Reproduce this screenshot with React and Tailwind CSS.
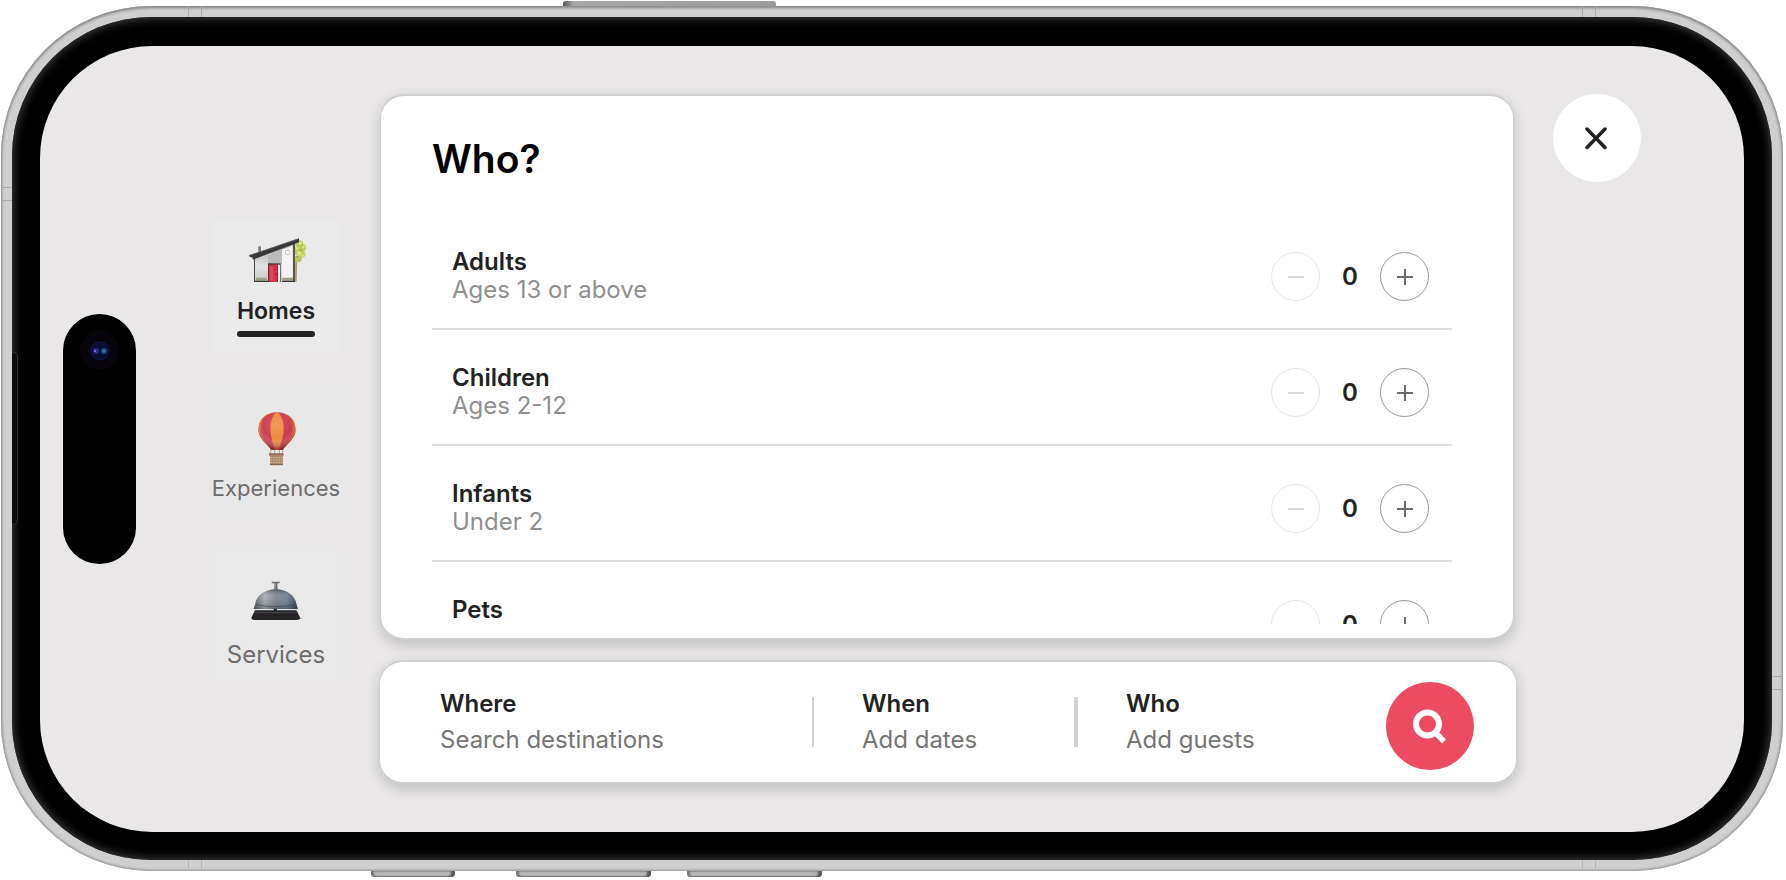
import React, { useState } from 'react';

const GUESTS = [
    { id: "adults", name: "Adults", detail: "Ages 13 or above" },
    { id: "children", name: "Children", detail: "Ages 2-12" },
    { id: "infants", name: "Infants", detail: "Under 2" },
    { id: "pets", name: "Pets" },
];

function HouseIcon() {
    return (
        <svg viewBox="138 82 180 138" className="w-[60px] h-[46px]" aria-hidden="true">
            <defs>
                <linearGradient id="wall" x1="0" y1="0" x2="0" y2="1">
                    <stop offset="0" stopColor="#a9a9ab" />
                    <stop offset="0.6" stopColor="#e2e2e3" />
                    <stop offset="1" stopColor="#c4c6bd" />
                </linearGradient>
            </defs>
            {/* Tree */}
            <path d="M286 140 L292 140 L290 216 L285 216 Z" fill="#b49a6c" />
            <g fill="#bccb5c">
                <circle cx="298" cy="104" r="12" />
                <circle cx="307" cy="114" r="11" />
                <circle cx="295" cy="124" r="14" />
                <circle cx="305" cy="134" r="11" />
                <circle cx="295" cy="148" r="10" />
            </g>
            <g fill="#dce68a">
                <circle cx="301" cy="101" r="5" />
                <circle cx="311" cy="112" r="4" />
                <circle cx="298" cy="131" r="6" />
                <circle cx="308" cy="138" r="4" />
                <circle cx="291" cy="115" r="4" />
            </g>
            <g fill="#8fa339">
                <circle cx="303" cy="122" r="3" />
                <circle cx="292" cy="141" r="3" />
                <circle cx="306" cy="106" r="2" />
                <circle cx="300" cy="150" r="2" />
            </g>
            <rect x="175" y="110" width="8" height="24" fill="#7a7a7d" />
            {/* Walls */}
            <path d="M163 145 L285 102 L285 216 L163 216 Z" fill="url(#wall)" />
            <path d="M204 138 L246 122 L246 164 L204 164 Z" fill="#bcbcbf" />
            <path d="M246 120 L278 108 L278 205 L246 205 Z" fill="#f3f3f3" />
            <path d="M279 104 L285 102 L285 216 L279 216 Z" fill="#555558" />
            <rect x="162" y="143" width="3" height="73" fill="#4a4a4c" />
            <rect x="168" y="204" width="32" height="9" fill="#9aa286" />
            <rect x="247" y="204" width="32" height="9" fill="#9aa286" />
            <path d="M162 213 H204 V217 H162 Z M246 213 H285 V217 H246 Z" fill="#3a3a3c" />
            {/* Door */}
            <rect x="204" y="161" width="38" height="56" fill="#4b3438" />
            <rect x="207" y="165" width="25" height="52" fill="#d93248" />
            <rect x="211" y="171" width="8" height="40" fill="#e34a5c" />
            <rect x="234" y="165" width="6" height="52" fill="#f4eeee" />
            <circle cx="228" cy="193" r="2" fill="#5b1821" />
            <rect x="257" y="122" width="12" height="13" rx="3" fill="#ffffff" stroke="#a5a5a8" strokeWidth="2" />
            {/* Roof */}
            <path d="M147 137 L297 86 L297 98 L158 150 L158 144 L149 141 Z" fill="#39393c" />
            <path d="M149 137 L295 88" stroke="#6b6b6e" strokeWidth="2" />
        </svg>
    );
}

function BalloonIcon() {
    return (
        <svg viewBox="-6 0 120 162" className="w-10 h-[54px]" aria-hidden="true">
            <defs>
                <radialGradient id="envelope" cx="0.5" cy="0.3" r="0.65">
                    <stop offset="0" stopColor="#ffffff" stopOpacity="0.15" />
                    <stop offset="0.6" stopColor="#ffffff" stopOpacity="0" />
                    <stop offset="1" stopColor="#5a1010" stopOpacity="0.5" />
                </radialGradient>
                <clipPath id="envelopeClip">
                    <path d="M57 1 C92 1 113 25 113 54 C113 80 84 98 74 114 H40 C30 98 1 80 1 54 C1 25 22 1 57 1 Z" />
                </clipPath>
            </defs>
            <g clipPath="url(#envelopeClip)">
                <rect width="114" height="116" fill="#d4413f" />
                <path d="M57 0 C20 2 6 30 8 60 C10 82 32 98 42 116 H0 V0 Z" fill="#db7440" />
                <path d="M57 0 C94 2 108 30 106 60 C104 82 82 98 72 116 H114 V0 Z" fill="#d6623b" />
                <path d="M57 0 C34 4 12 28 12 56 C12 80 36 98 44 116 H54 C44 90 36 72 36 52 C36 28 44 8 57 0 Z" fill="#cf3f58" />
                <path d="M57 0 C80 4 102 28 102 56 C102 80 78 98 70 116 H60 C70 90 78 72 78 52 C78 28 70 8 57 0 Z" fill="#c93a50" />
                <path d="M57 0 C44 8 37 28 37 52 C37 74 45 94 52 116 H62 C69 94 77 74 77 52 C77 28 70 8 57 0 Z" fill="#ec8a3e" />
                <rect width="114" height="116" fill="url(#envelope)" />
            </g>
            <path d="M39 112 L37 126 M75 112 L73 126 M50 114 V126 M64 114 V126" stroke="#8b7a6c" strokeWidth="2" />
            <rect x="33" y="124" width="44" height="7" rx="2" fill="#8f6c4f" />
            <rect x="36" y="130" width="39" height="29" rx="3" fill="#a98a6d" />
            <path d="M37 137 H74 M37 144 H74 M37 151 H74" stroke="#d2b797" strokeWidth="3" strokeDasharray="5 3" />
            <path d="M36 158 H75" stroke="#7d5c44" strokeWidth="3" />
        </svg>
    );
}

function BellIcon() {
    return (
        <svg viewBox="151 418 168 126" className="w-[56px] h-[42px]" aria-hidden="true">
            <defs>
                <linearGradient id="dome" x1="0" y1="0" x2="1" y2="0">
                    <stop offset="0" stopColor="#4d535b" />
                    <stop offset="0.25" stopColor="#a3a8ad" />
                    <stop offset="0.5" stopColor="#747b84" />
                    <stop offset="0.75" stopColor="#66788d" />
                    <stop offset="1" stopColor="#2c3644" />
                </linearGradient>
                <linearGradient id="domeShade" x1="0" y1="0" x2="0" y2="1">
                    <stop offset="0" stopColor="#1d232b" stopOpacity="0.45" />
                    <stop offset="0.35" stopColor="#ffffff" stopOpacity="0.12" />
                    <stop offset="1" stopColor="#1d232b" stopOpacity="0.3" />
                </linearGradient>
            </defs>
            <ellipse cx="266" cy="533" rx="51" ry="5" fill="#c9c6c4" />
            <path d="M222 423 H246 V428 H239 L240 446 H229 L230 428 H222 Z" fill="#696d71" />
            <path d="M232 428 V444" stroke="#c9cccf" strokeWidth="2" />
            <path d="M172 508 L296 508 L308 532 C308 537 300 538 290 538 H176 C166 538 161 537 161 532 Z" fill="#232326" />
            <path d="M170 516 H300" stroke="#4b4b4f" strokeWidth="3" />
            <path d="M172 492 C176 462 206 446 234 446 C264 446 292 462 297 492 L300 503 C300 507 296 508 290 508 H178 C172 508 168 507 168 503 Z" fill="url(#dome)" />
            <path d="M172 492 C176 462 206 446 234 446 C264 446 292 462 297 492 L300 503 C300 507 296 508 290 508 H178 C172 508 168 507 168 503 Z" fill="url(#domeShade)" />
            <path d="M176 491 C206 500 262 500 293 491" stroke="#39424d" strokeWidth="2" fill="none" />
            <path d="M169 507 H300" stroke="#dfe2e4" strokeWidth="4" />
            <rect x="228" y="504" width="10" height="6" rx="2" fill="#222225" />
        </svg>
    );
}

function GuestRow({ guest, count, onChange }) {
    return (
        <li className="h-[116px] shrink-0 flex items-start justify-between pl-5 pr-[23px] border-b-2 border-[#dedede]">
            <div className="pt-[34px] text-2xl leading-7">
                <h2 className="font-semibold text-[#222222]">{guest.name}</h2>
                {guest.detail && <p className="text-[#8f8f8f]">{guest.detail}</p>}
            </div>
            <div className="pt-[38px] flex items-center">
                <button
                    type="button"
                    aria-label={`Fewer ${guest.name}`}
                    disabled={count === 0}
                    onClick={() => onChange(count - 1)}
                    className="w-[49px] h-[49px] flex items-center justify-center rounded-full border border-[#b0b0b0] disabled:border-[#e6e6e6] text-[#6a6a6a] disabled:text-[#d9d9d9]"
                >
                    <svg viewBox="0 0 16 16" className="w-4 h-4" stroke="currentColor" strokeWidth="2">
                        <path d="M0 8 H16" />
                    </svg>
                </button>
                <span className="w-[60px] text-center text-2xl leading-7 font-semibold text-[#222222]">{count}</span>
                <button
                    type="button"
                    aria-label={`More ${guest.name}`}
                    onClick={() => onChange(count + 1)}
                    className="w-[49px] h-[49px] flex items-center justify-center rounded-full border border-[#969696] text-[#6a6a6a]"
                >
                    <svg viewBox="0 0 16 16" className="w-4 h-4" stroke="currentColor" strokeWidth="2">
                        <path d="M0 8 H16 M8 0 V16" />
                    </svg>
                </button>
            </div>
        </li>
    );
}

function SearchField({ title, hint }) {
    return (
        <button type="button" className="text-left text-2xl leading-9">
            <span className="block font-semibold text-[#222222]">{title}</span>
            <span className="block text-[#757575]">{hint}</span>
        </button>
    );
}

function App() {
    const [counts, setCounts] = useState({ adults: 0, children: 0, infants: 0, pets: 0 });

    return (
        <div className="h-screen min-h-[700px] flex flex-col overflow-hidden bg-white pl-px pr-[3px] pb-[3px] font-['Inter',sans-serif]">
            {/* Side button on the top edge */}
            <div className="h-[6px] shrink-0 pt-px pl-[562px] flex">
                <div className="w-[213px] rounded-t-[3px] bg-linear-to-r from-[#555555] via-[#a8a8a8] via-5% to-[#9c9c9c]" />
            </div>

            {/* Metal band */}
            <div className="relative flex-1 min-h-0 flex p-[11px] rounded-[150px] bg-[#cfcfcf] shadow-[inset_0_2px_3px_#8b8b8b,inset_0_-1px_2px_#a5a5a5,inset_1px_0_3px_#a0a0a0,inset_-1px_0_3px_#a0a0a0]">
                {/* Antenna lines */}
                <div className="absolute top-0 left-[187px] w-3.5 h-[11px] border-x border-[#a9a9a9]" />
                <div className="absolute top-0 right-[187px] w-3.5 h-[11px] border-x border-[#a9a9a9]" />
                <div className="absolute bottom-0 left-[187px] w-3.5 h-[11px] border-x border-[#b5b5b5]" />
                <div className="absolute bottom-0 right-[187px] w-3.5 h-[11px] border-x border-[#b5b5b5]" />
                <div className="absolute left-0 top-[181px] w-[11px] h-3.5 border-y border-[#a9a9a9]" />
                <div className="absolute right-0 bottom-[181px] w-[11px] h-3.5 border-y border-[#a9a9a9]" />

                {/* Bezel */}
                <div className="relative flex-1 min-w-0 flex px-7 pt-[29px] pb-7 rounded-[139px] bg-black shadow-[inset_0_0_8px_2px_#3a3a3a]">
                    <div className="absolute left-0 top-[335px] w-[6px] h-[173px] rounded-r-[5px] border border-l-0 border-[#303030] bg-[#0c0c0c]" />

                    <main className="flex-1 min-w-0 flex rounded-[112px] bg-[#e9e7e8]">
                        {/* Dynamic island */}
                        <div className="self-center shrink-0 ml-[23px] w-[73px] h-[250px] pt-[17px] flex justify-center items-start rounded-full bg-black">
                            <div className="w-[39px] h-[39px] flex items-center justify-center rounded-full bg-[#07050b]">
                                <svg viewBox="0 0 20 20" className="w-5 h-5" aria-hidden="true">
                                    <circle cx="10" cy="10" r="9" fill="#0b0d33" stroke="#12184a" strokeWidth="1" />
                                    <circle cx="6" cy="10" r="3" fill="#2c2b86" />
                                    <circle cx="14" cy="10" r="3" fill="#1f4a80" />
                                    <circle cx="5" cy="10" r="1" fill="#8a84d8" />
                                    <circle cx="14" cy="10" r="1" fill="#4f8fae" />
                                </svg>
                            </div>
                        </div>

                        <nav className="shrink-0 ml-[75px] pt-44 flex flex-col gap-[34px]">
                            <a href="#homes" className="w-[130px] h-[130px] pt-[15px] flex flex-col items-center bg-[#eaeaea]">
                                <HouseIcon />
                                <span className="mt-3.5 text-[23px] leading-7 font-semibold text-[#222222]">Homes</span>
                                <span className="mt-1.5 w-[78px] h-[6px] rounded-full bg-[#222222]" />
                            </a>
                            <a href="#experiences" className="w-[130px] h-[130px] pt-[26px] flex flex-col items-center bg-[#e8e8e8]">
                                <BalloonIcon />
                                <span className="mt-2 text-[22px] leading-7 text-[#6c6c6c]">Experiences</span>
                            </a>
                            <a href="#services" className="w-[130px] h-[130px] pt-[30px] flex flex-col items-center bg-[#e9e9e9]">
                                <BellIcon />
                                <span className="mt-[19px] text-2xl leading-7 text-[#6c6c6c]">Services</span>
                            </a>
                        </nav>

                        <div className="flex-1 min-w-0 ml-[38px] py-12 flex flex-col gap-5">
                            <section className="flex-1 min-h-0 flex flex-col ml-px mr-[3px] pt-[39px] pl-[51px] pr-[61px] pb-3.5 rounded-3xl border-x border-y-2 border-[#d0cfd0] bg-white shadow-[0_5px_14px_rgba(0,0,0,0.18)]">
                                <h1 className="mb-[31px] text-[39px] leading-[48px] font-semibold text-black">Who?</h1>
                                <ul className="flex-1 min-h-0 overflow-y-auto [scrollbar-width:none]">
                                    {GUESTS.map((guest) => (
                                        <GuestRow
                                            key={guest.id}
                                            guest={guest}
                                            count={counts[guest.id]}
                                            onChange={(n) => setCounts({ ...counts, [guest.id]: n })}
                                        />
                                    ))}
                                </ul>
                            </section>

                            <section className="h-[124px] shrink-0 flex items-center pl-[60px] pr-[42px] rounded-3xl border-x border-y-2 border-[#d0cfd0] bg-white shadow-[0_5px_14px_rgba(0,0,0,0.18)]">
                                <div className="flex-1">
                                    <SearchField title="Where" hint="Search destinations" />
                                </div>
                                <div className="w-0.5 h-[50px] bg-[#d2d2d2]" />
                                <div className="w-[260px] pl-12">
                                    <SearchField title="When" hint="Add dates" />
                                </div>
                                <div className="w-1 h-[50px] bg-[#d2d2d2]" />
                                <div className="w-[308px] pl-12">
                                    <SearchField title="Who" hint="Add guests" />
                                </div>
                                <button
                                    type="button"
                                    aria-label="Search"
                                    className="w-[88px] h-[88px] shrink-0 mt-2 flex items-center justify-center rounded-full bg-[#ed4c60]"
                                >
                                    <svg viewBox="0 0 36 36" className="w-9 h-9" fill="none" stroke="#ffffff" aria-hidden="true">
                                        <circle cx="15.500" cy="16" r="11.500" strokeWidth="6" />
                                        <path d="M23 24 L32 33.500" strokeWidth="5.5" />
                                    </svg>
                                </button>
                            </section>
                        </div>

                        <button
                            type="button"
                            aria-label="Close"
                            className="w-[88px] h-[88px] shrink-0 mt-12 ml-9 mr-[103px] flex items-center justify-center rounded-full bg-white"
                        >
                            <svg viewBox="0 0 24 24" className="w-6 h-6" fill="none" stroke="#222222" strokeWidth="3.5" strokeLinecap="round">
                                <path d="M2 3 L20 21.500 M20 3 L2 21.500" />
                            </svg>
                        </button>
                    </main>
                </div>
            </div>

            {/* Side buttons on the bottom edge */}
            <div className="h-[6px] shrink-0 pl-[370px] flex">
                <div className="w-[84px] rounded-b-[4px] bg-[#b9b9b9] shadow-[inset_3px_0_2px_#777777,inset_-4px_0_2px_#555555,inset_0_-1px_1px_#8a8a8a]" />
                <div className="ml-[61px] w-[135px] rounded-b-[4px] bg-[#b9b9b9] shadow-[inset_3px_0_2px_#777777,inset_-4px_0_2px_#555555,inset_0_-1px_1px_#8a8a8a]" />
                <div className="ml-9 w-[135px] rounded-b-[4px] bg-[#b9b9b9] shadow-[inset_3px_0_2px_#777777,inset_-4px_0_2px_#555555,inset_0_-1px_1px_#8a8a8a]" />
            </div>
        </div>
    );
}

export default App;
